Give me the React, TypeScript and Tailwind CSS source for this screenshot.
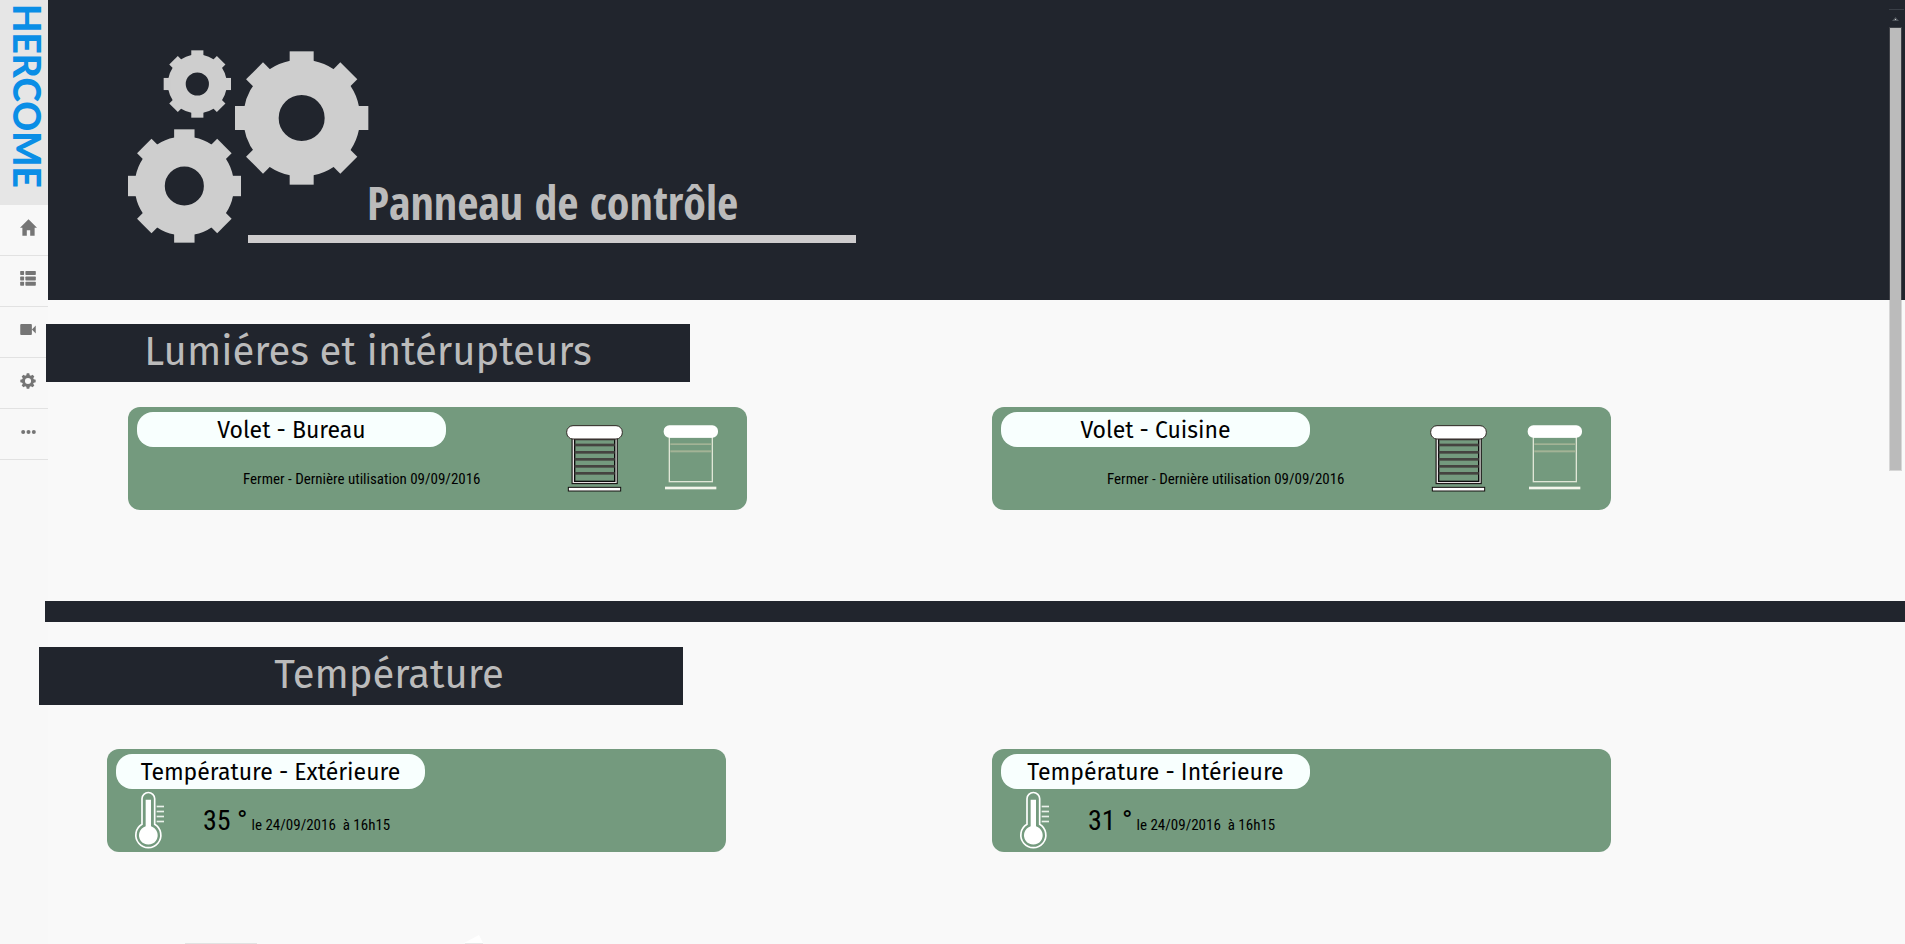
import type { ReactNode } from "react";

const navItems = [
  { label: "Accueil", icon: <HomeIcon /> },
  { label: "Liste", icon: <ListIcon /> },
  { label: "Caméras", icon: <CameraIcon /> },
  { label: "Réglages", icon: <GearIcon /> },
  { label: "Plus", icon: <DotsIcon /> },
];

function HomeIcon() {
  return (
    <svg viewBox="0 0 50 50" className="size-[17px] fill-[#757575]" aria-hidden="true">
      <path d="M25 1 50 26H43V49H30V33H20V49H7V26H0Z" />
    </svg>
  );
}

function ListIcon() {
  return (
    <svg viewBox="0 0 48 46" className="h-[15px] w-4 fill-[#757575]" aria-hidden="true">
      {[0, 17, 33].map((y) => (
        <g key={y}>
          <rect x="0" y={y} width="12" height="12" rx="2" />
          <rect x="16" y={y} width="32" height="12" rx="2" />
        </g>
      ))}
    </svg>
  );
}

function CameraIcon() {
  return (
    <svg viewBox="0 0 48 34" className="h-[11px] w-4 fill-[#757575]" aria-hidden="true">
      <rect x="0" y="0" width="36" height="34" rx="3" />
      <path d="M36 17 48 5V29Z" />
    </svg>
  );
}

function GearIcon() {
  return (
    <svg viewBox="-25 -25 50 50" className="size-4" aria-hidden="true">
      <g fill="#757575">
        {[0, 45, 90, 135, 180, 225, 270, 315].map((a) => (
          <path key={a} d="M-6 -15-4 -24H4L6 -15Z" transform={`rotate(${a})`} />
        ))}
      </g>
      <circle r="14" fill="none" stroke="#757575" strokeWidth="9" />
    </svg>
  );
}

function DotsIcon() {
  return (
    <svg viewBox="0 0 44 12" className="h-1 w-[15px] fill-[#757575]" aria-hidden="true">
      <circle cx="6" cy="6" r="6" />
      <circle cx="22" cy="6" r="6" />
      <circle cx="38" cy="6" r="6" />
    </svg>
  );
}

function Cog({ x, y, r }: { x: number; y: number; r: number }) {
  return (
    <g transform={`translate(${x} ${y}) scale(${r / 100})`}>
      <circle r="61" fill="none" stroke="#cecece" strokeWidth="53" />
      {[0, 45, 90, 135, 180, 225, 270, 315].map((a) => (
        <rect key={a} x="-18" y="-100" width="36" height="20" fill="#cecece" transform={`rotate(${a})`} />
      ))}
    </g>
  );
}

function Cogs() {
  return (
    <svg viewBox="54 60 723 579" className="h-[193px] w-[241px] shrink-0" aria-hidden="true">
      <Cog x={262} y={162} r={101} />
      <Cog x={575} y={264} r={200} />
      <Cog x={223} y={468} r={170} />
    </svg>
  );
}

function ShutterClosed() {
  return (
    <svg viewBox="48 44 171 201" className="h-[67px] w-[57px]" aria-hidden="true">
      <rect x="67" y="82" width="134" height="137" fill="none" stroke="#1c1a18" strokeWidth="5" />
      <rect x="70" y="84" width="128" height="132" fill="none" stroke="#e4dfe0" strokeWidth="4" />
      <rect x="74" y="85" width="120" height="128" fill="none" stroke="#0c0c0c" strokeWidth="4" />
      {[86, 104, 126, 147, 168, 189].map((y) => (
        <rect key={y} x="74" y={y - 4} width="120" height="8" fill="#454340" />
      ))}
      <rect x="50" y="46" width="167" height="40" rx="19" fill="#fff" stroke="#2e2723" strokeWidth="3" />
      <rect x="55" y="231" width="157" height="11" fill="#fff" stroke="#141010" strokeWidth="3" />
    </svg>
  );
}

function ShutterOpen() {
  return (
    <svg viewBox="338 44 168 201" className="h-[67px] w-14" aria-hidden="true">
      <rect x="357" y="80" width="129" height="134" fill="none" stroke="#dfe6d6" strokeWidth="4" />
      <rect x="360" y="99" width="124" height="5" fill="#a3b396" />
      <rect x="360" y="120" width="124" height="6" fill="#a3b396" />
      <rect x="340" y="45" width="163" height="37" rx="17" fill="#fff" />
      <rect x="344" y="229" width="154" height="8" fill="#f4f6ec" />
    </svg>
  );
}

function Thermometer() {
  return (
    <svg viewBox="70 151 93 177" className="h-[59px] w-[31px] shrink-0" aria-hidden="true">
      <path
        d="M94 174a19 18.500 0 0 1 38 0V251a37.500 37.500 0 1 1-38 0Z"
        fill="none"
        stroke="#fff"
        strokeWidth="5"
      />
      <path d="M105 177H121V257a28 28 0 1 1-16 0Z" fill="#fff" />
      {[197, 212, 227, 242].map((y) => (
        <rect key={y} x="138" y={y - 2} width="22" height="5" fill="#e9f1ea" />
      ))}
    </svg>
  );
}

function SectionTitle({ children }: { children: ReactNode }) {
  return (
    <h2 className="flex h-[58px] w-[644px] max-w-full justify-center bg-[#21252d] font-['Fira_Sans','Noto_Sans',sans-serif] text-[40px] leading-[56px] text-[#bbb]">
      {children}
    </h2>
  );
}

function Card({ title, children }: { title: string; children: ReactNode }) {
  return (
    <article className="relative h-[103px] w-[619px] max-w-full rounded-xl bg-[#749a7e] pt-[5px] pl-[9px] text-black">
      <h3 className="h-[35px] w-[309px] rounded-2xl bg-[#f8fffe] text-center font-['Fira_Sans','Noto_Sans',sans-serif] text-[23px] leading-9">
        {title}
      </h3>
      {children}
    </article>
  );
}

function ShutterCard({ room }: { room: string }) {
  return (
    <Card title={`Volet - ${room}`}>
      <p className="mt-5 pl-[106px] font-['Roboto_Condensed',Roboto,sans-serif] text-[15px] leading-6">
        Fermer - Dernière utilisation 09/09/2016
      </p>
      <div className="absolute top-[18px] right-7 flex gap-10">
        <button type="button" aria-label={`Fermer le volet ${room}`}>
          <ShutterClosed />
        </button>
        <button type="button" aria-label={`Ouvrir le volet ${room}`}>
          <ShutterOpen />
        </button>
      </div>
    </Card>
  );
}

function TemperatureCard({ place, value }: { place: string; value: number }) {
  return (
    <Card title={`Température - ${place}`}>
      <div className="flex items-start gap-[38px] pt-0.5 pl-[18px] font-['Roboto_Condensed',Roboto,sans-serif]">
        <Thermometer />
        <p className="flex items-baseline gap-1 pt-3 text-[15px] leading-9">
          <span className="text-[28px]">{value} °</span>
          <span className="whitespace-pre">le 24/09/2016  à 16h15</span>
        </p>
      </div>
    </Card>
  );
}

export default function App() {
  return (
    <div className="relative flex h-screen overflow-hidden bg-[#f9f9f9]">
      <nav className="w-12 shrink-0 bg-[#f8f8f8]" aria-label="Navigation principale">
        <a
          href="#"
          className="flex h-[205px] items-center bg-[#e6e6e6] pt-1 pl-1.5 font-['Lato',sans-serif] text-[37px] leading-[42px] font-black text-[#0a8ee6] [writing-mode:vertical-rl]"
        >
          <span className="w-full">HERCOME</span>
        </a>
        {navItems.map((item) => (
          <a
            key={item.label}
            href="#"
            aria-label={item.label}
            className="flex h-[51px] items-center justify-center border-b border-[#e2e2e2] pb-[5px] pl-2"
          >
            {item.icon}
          </a>
        ))}
      </nav>

      <main className="min-w-0 flex-1">
        <header className="flex h-[300px] items-start bg-[#21252d] pt-[50px] pl-20">
          <Cogs />
          <h1 className="mt-[120px] -ml-[121px] w-[608px] border-b-8 border-[#cecccd] pl-[119px] font-['Open_Sans_Condensed','Open_Sans',sans-serif] text-[46px] leading-[65px] font-bold text-[#bbb]">
            Panneau de contrôle
          </h1>
        </header>

        <section className="pt-6">
          <div className="-ml-0.5">
            <SectionTitle>Lumiéres et intérupteurs</SectionTitle>
          </div>
          <div className="grid grid-cols-2 pt-[25px] pr-[49px] pl-20">
            <ShutterCard room="Bureau" />
            <ShutterCard room="Cuisine" />
          </div>
        </section>

        <div className="mt-[91px] -ml-[3px] h-[21px] bg-[#21252d]" />

        <section className="pt-[25px]">
          <div className="-ml-[9px]">
            <SectionTitle>
              <span className="pl-14">Température</span>
            </SectionTitle>
          </div>
          <div className="grid grid-cols-2 pt-11 pr-7 pl-[59px]">
            <TemperatureCard place="Extérieure" value={35} />
            <TemperatureCard place="Intérieure" value={31} />
          </div>
        </section>

        <svg viewBox="0 0 300 13" className="mt-[79px] ml-[137px] h-[13px] w-[300px]" aria-hidden="true">
          <rect x="0" y="12" width="72" height="1" fill="#e2e2e2" />
          <path d="M279 12 294 4 298 12Z" fill="#fff" />
          <rect x="280" y="12" width="18" height="1" fill="#e8e8e8" />
        </svg>
      </main>

      <div className="absolute top-[9px] right-0 flex w-4 flex-col items-start" aria-hidden="true">
        <div className="h-px w-[15px] bg-[#3a3f47]" />
        <svg viewBox="0 0 7 4" className="mt-[7px] ml-[3px] h-1 w-[7px]">
          <path d="M0 4 3.500 0 7 4Z" fill="#50555c" />
          <rect x="3" y="2" width="1" height="1" fill="#c8c8c8" />
        </svg>
        <div className="mt-1.5 h-[444px] w-[13px] border border-[#8888884d] bg-[#bbb] bg-clip-padding" />
      </div>
    </div>
  );
}
